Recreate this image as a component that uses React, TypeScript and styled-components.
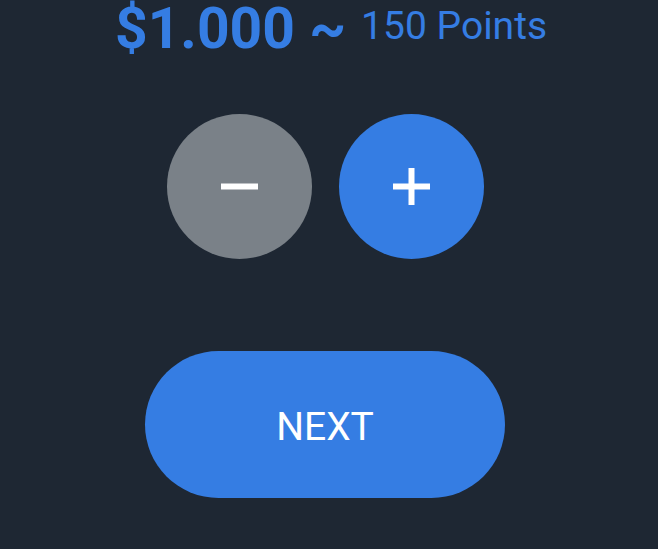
import React, { useState } from "react";
import styled, { createGlobalStyle } from "styled-components";

const GlobalStyle = createGlobalStyle`
  html, body {
    margin: 0;
    padding: 0;
    background: #1e2733;
    font-family: Roboto, "Noto Sans", "Liberation Sans", sans-serif;
  }
`;

const Screen = styled.div`
  min-height: 549px;
  background: #1e2733;
  display: flex;
  flex-direction: column;
  align-items: center;
  padding-right: 8px;
  box-sizing: border-box;
`;

const Summary = styled.div`
  display: flex;
  align-items: center;
  gap: 15px;
  height: 56px;
  color: #357de3;
  margin-left: 12px;
`;

const Amount = styled.span`
  font-size: 57px;
  font-weight: 700;
  line-height: 1;
`;

const Points = styled.span`
  font-size: 39px;
  font-weight: 400;
  line-height: 1;
  padding-bottom: 4px;
`;

const Controls = styled.div`
  display: flex;
  gap: 27px;
  margin-top: 58px;
`;

const RoundButton = styled.button<{ $tone: "gray" | "blue" }>`
  width: 145px;
  height: 145px;
  border-radius: 50%;
  border: none;
  padding: 0;
  display: flex;
  align-items: center;
  justify-content: center;
  cursor: pointer;
  background: ${(p) => (p.$tone === "gray" ? "#7a8188" : "#357de3")};
`;

const NextButton = styled.button`
  margin-top: 92px;
  width: 360px;
  height: 147px;
  border-radius: 74px;
  border: none;
  padding: 4px 0 0;
  background: #357de3;
  color: #ffffff;
  font-family: Roboto, "Noto Sans", "Liberation Sans", sans-serif;
  font-size: 39px;
  font-weight: 400;
  cursor: pointer;
`;

const Sign = ({ plus }: { plus?: boolean }) => (
  <svg width="37" height="37" viewBox="0 0 37 37">
    <rect x="0" y="15.5" width="37" height="6" fill="#ffffff" />
    {plus && <rect x="15.5" y="0" width="6" height="37" fill="#ffffff" />}
  </svg>
);

const App = () => {
  const [amount, setAmount] = useState(1000);

  const dollars = "$" + amount.toLocaleString("de-DE");
  const points = Math.round(amount * 0.15);

  return (
    <>
      <GlobalStyle />
      <Screen>
        <Summary>
          <Amount>{dollars} ~</Amount>
          <Points>{points} Points</Points>
        </Summary>
        <Controls>
          <RoundButton $tone="gray" onClick={() => setAmount((a) => Math.max(0, a - 100))}>
            <Sign />
          </RoundButton>
          <RoundButton $tone="blue" onClick={() => setAmount((a) => a + 100)}>
            <Sign plus />
          </RoundButton>
        </Controls>
        <NextButton>NEXT</NextButton>
      </Screen>
    </>
  );
};

export default App;
